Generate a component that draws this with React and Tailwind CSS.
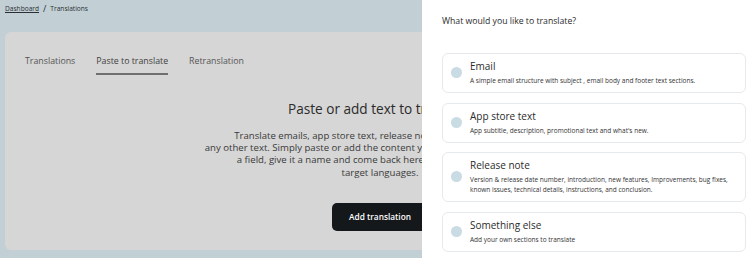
const options = [
    { title: "Email", desc: "A simple email structure with subject , email body and footer text sections." },
    { title: "App store text", desc: "App subtitle, description, promotional text and what's new." },
    { title: "Release note", desc: "Version & release date number, introduction, new features, Improvements, bug fixes, known issues, technical details, instructions, and conclusion." },
    { title: "Something else", desc: "Add your own sections to translate" },
];

const App = () => {
    return (
        <div className="relative h-[258px] w-[750px] overflow-hidden bg-[#c2d0d5] text-[#222]" style={{ fontFamily: '"Open Sans", "Liberation Sans", sans-serif' }}>
            {/* page under the overlay */}
            <div className="px-[5px] pt-[3px]">
                <div className="flex h-[12px] items-center gap-[4px] text-[6.6px] text-[#2a2f33]">
                    <span className="underline">Dashboard</span>
                    <span className="text-[9px]">/</span>
                    <span>Translations</span>
                </div>
                <div className="mt-[17px] h-[218px] w-[760px] rounded-[6px] bg-[#d6d6d6] px-[20px] pt-[23px]">
                    <div className="flex gap-[21px] text-[8.8px] text-[#555]">
                        <span className="pb-[6px]">Translations</span>
                        <span className="border-b-2 border-[#6f6f6f] pb-[5px] text-[#3f3f3f]">Paste to translate</span>
                        <span className="pb-[6px]">Retranslation</span>
                    </div>
                    <div className="ml-[200px] mt-[24px] flex w-[310px] flex-col items-center text-center">
                        <p className="text-[13.6px] text-[#2a2a2a]">Paste or add text to translate</p>
                        <p className="mt-[10px] whitespace-nowrap text-[9.6px] leading-[12.4px] text-[#3a3a3a]">
                            Translate emails, app store text, release notes, marketing copy or<br />
                            any other text. Simply paste or add the content you would like to translate into<br />
                            a field, give it a name and come back here to choose the desired<br />
                            target languages.
                        </p>
                        <button className="mt-[24px] h-[28px] rounded-[5px] bg-[#15181b] px-[17px] text-[8.3px] font-semibold text-white">Add translation</button>
                    </div>
                </div>
            </div>

            {/* side panel */}
            <div className="absolute right-0 top-0 flex h-full w-[328px] flex-col bg-white pl-[20px] pr-[4px]">
                <p className="mt-[15px] text-[8.7px] font-medium text-[#2b2b2b]">What would you like to translate?</p>
                <div className="mt-[25px] flex flex-col gap-[9.5px]">
                    {options.map((o) => (
                        <div key={o.title} className="flex items-center rounded-[6px] border border-[#e6eaec] pb-[6px] pl-[8px] pr-[10px] pt-[5px]">
                            <span className="h-[11px] w-[11px] shrink-0 rounded-full bg-[#c9dbe3]"></span>
                            <div className="ml-[8px]">
                                <p className="text-[10px] leading-[14px] text-[#2b2b2b]">{o.title}</p>
                                <p className="mt-[3px] text-[6.5px] leading-[10px] text-[#333]">{o.desc}</p>
                            </div>
                        </div>
                    ))}
                </div>
            </div>
        </div>
    );
};

export default App;
